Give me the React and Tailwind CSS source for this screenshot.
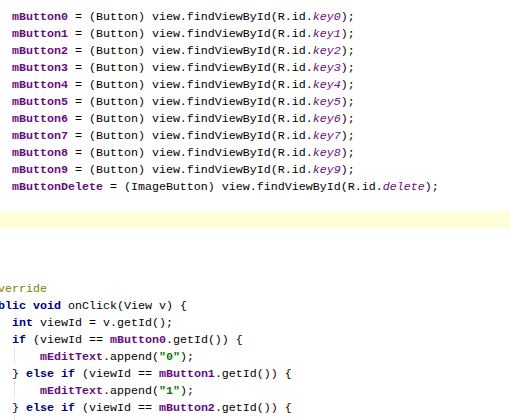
const K = ({ children }) => <span className="font-bold text-[#000080]">{children}</span>;
const F = ({ children }) => <span className="font-bold text-[#660e7a]">{children}</span>;
const S = ({ children }) => <span className="italic text-[#660e7a]">{children}</span>;
const Str = ({ children }) => <span className="font-bold text-[#008000]">{children}</span>;
const A = ({ children }) => <span className="text-[#808000]">{children}</span>;

const buttonLine = (n) => (
  <>
    {"    "}
    <F>mButton{n}</F> = (Button) view.findViewById(R.id.<S>key{n}</S>);
  </>
);

const lines = [
  ...[0, 1, 2, 3, 4, 5, 6, 7, 8, 9].map(buttonLine),
  <>
    {"    "}
    <F>mButtonDelete</F> = (ImageButton) view.findViewById(R.id.<S>delete</S>);
  </>,
  null,
  null,
  null,
  <>{"}"}</>,
  null,
  <A>@Override</A>,
  <>
    <K>public void</K> onClick(View v) {"{"}
  </>,
  <>
    {"    "}
    <K>int</K> viewId = v.getId();
  </>,
  <>
    {"    "}
    <K>if</K> (viewId == <F>mButton0</F>.getId()) {"{"}
  </>,
  <>
    {"        "}
    <F>mEditText</F>.append(<Str>"0"</Str>);
  </>,
  <>
    {"    } "}
    <K>else if</K> (viewId == <F>mButton1</F>.getId()) {"{"}
  </>,
  <>
    {"        "}
    <F>mEditText</F>.append(<Str>"1"</Str>);
  </>,
  <>
    {"    } "}
    <K>else if</K> (viewId == <F>mButton2</F>.getId()) {"{"}
  </>,
  <>
    {"        "}
    <F>mEditText</F>.append(<Str>"2"</Str>);
  </>,
];

const CARET_LINE = 12;
const GUIDE_LINES = [20, 22, 24];

export default function App() {
  return (
    <div className="w-[510px] h-[420px] overflow-hidden bg-white font-['Liberation_Mono','Courier_New',monospace] text-[11.67px] text-black">
      <div className="pt-[7px] ml-[-16px] w-[526px]">
        {lines.map((line, i) => (
          <div
            key={i}
            className={`relative h-[17px] leading-[17px] whitespace-pre ${
              i === CARET_LINE ? "bg-[#ffffd7]" : ""
            }`}
          >
            {GUIDE_LINES.includes(i) && (
              <div className="absolute left-[30px] top-0 h-[17px] w-px bg-[#e4e4e4]" />
            )}
            <span className="relative top-[2px]">{line ?? " "}</span>
          </div>
        ))}
      </div>
    </div>
  );
}
